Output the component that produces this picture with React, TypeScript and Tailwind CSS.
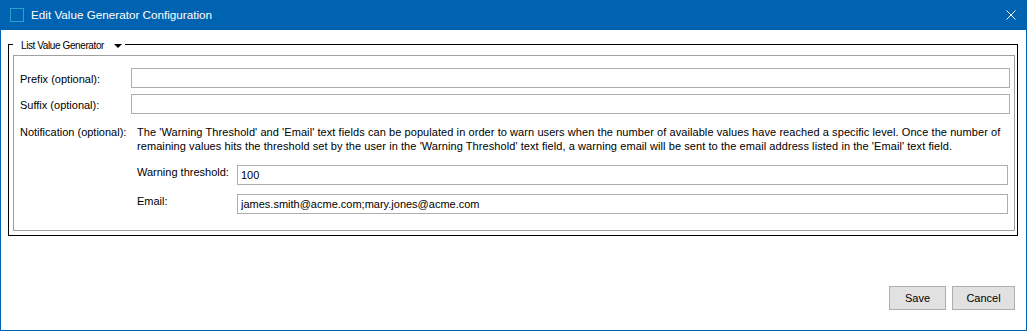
import React from "react";

const inputCls =
  "h-[20px] w-full border border-[#adadad] bg-white px-[3px] text-[11px] text-black outline-none";

const App = () => {
  return (
    <div className="flex h-[331px] w-[1027px] flex-col font-['Liberation_Sans',Arial,sans-serif] text-[11px] text-black">
      {/* Title bar */}
      <div className="flex h-[30px] shrink-0 items-center bg-[#0063b1] text-white">
        <div className="ml-[10px] h-[14px] w-[14px] border border-[#26a3c9]"></div>
        <span className="ml-[7px] text-[11.7px] leading-[14px]">
          Edit Value Generator Configuration
        </span>
        <div className="flex-1"></div>
        <svg className="mr-[11px]" width="10" height="10" viewBox="0 0 10 10">
          <path d="M0.5 0.5 L9.5 9.5 M9.5 0.5 L0.5 9.5" stroke="white" strokeWidth="1" fill="none" />
        </svg>
      </div>

      {/* Body */}
      <div className="flex flex-1 flex-col border-x border-b border-[#0063b1] bg-white">
        <div className="pl-[7px] pr-[8px] pt-[14px]">
          {/* Group box */}
          <div className="relative border border-black">
            <div className="absolute left-[4px] top-[-5px] flex h-[12px] items-center bg-white pl-[8px] pr-[3px]">
              <span className="text-[10px] leading-[12px] tracking-[-0.4px]">
                List Value Generator
              </span>
              <svg className="ml-[10px]" width="8" height="4" viewBox="0 0 8 4">
                <polygon points="0,0 8,0 4,4" fill="black" />
              </svg>
            </div>

            <div className="mb-[4px] ml-[4px] mr-[2px] mt-[10px] border border-[#a0a0a0] pb-[16px] pl-[6px] pr-[4px] pt-[12px]">
              <div className="grid grid-cols-[111px_1fr] items-start gap-y-[6px] leading-[14px]">
                <span className="pt-[4px]">Prefix (optional):</span>
                <input className={inputCls} readOnly value="" />
                <span className="pt-[4px]">Suffix (optional):</span>
                <input className={inputCls} readOnly value="" />
              </div>

              <div className="mt-[11px] grid grid-cols-[117px_1fr] items-start leading-[14px]">
                <span>Notification (optional):</span>
                <div className="pr-[2px]">
                  <p className="whitespace-nowrap leading-[14px] tracking-[0.075px]">
                    The 'Warning Threshold' and 'Email' text fields can be populated in order to warn users when the number of available values have reached a specific level. Once the number of
                    <br />
                    remaining values hits the threshold set by the user in the 'Warning Threshold' text field, a warning email will be sent to the email address listed in the 'Email' text field.
                  </p>
                  <div className="mt-[12px] grid grid-cols-[100px_1fr] items-start gap-y-[9px]">
                    <span>Warning threshold:</span>
                    <input className={inputCls} readOnly value="100" />
                    <span>Email:</span>
                    <input
                      className={inputCls}
                      readOnly
                      value="james.smith@acme.com;mary.jones@acme.com"
                    />
                  </div>
                </div>
              </div>
            </div>
          </div>
        </div>

        {/* Footer buttons */}
        <div className="mt-auto flex justify-end gap-[6px] pb-[20px] pr-[11px]">
          <button className="h-[24px] w-[57px] border border-[#adadad] bg-[#e1e1e1] text-[11px] text-black">
            Save
          </button>
          <button className="h-[24px] w-[63px] border border-[#adadad] bg-[#e1e1e1] text-[11px] text-black">
            Cancel
          </button>
        </div>
      </div>
    </div>
  );
};

export default App;
